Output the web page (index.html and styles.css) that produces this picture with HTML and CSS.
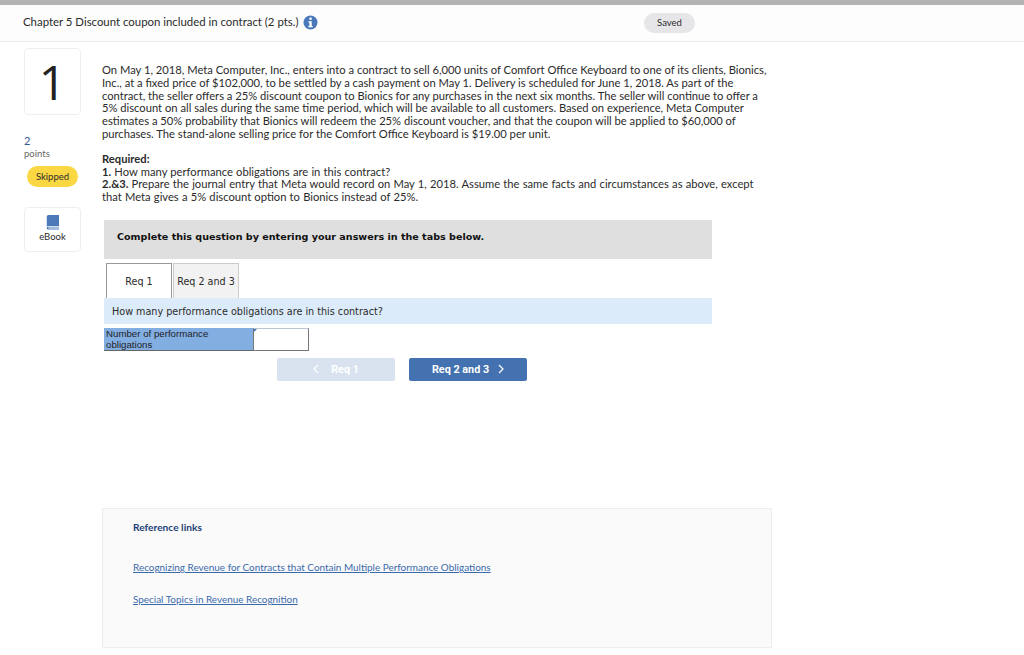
FILE: index.html
```html
<!DOCTYPE html>
<html lang="en">
  <head>
    <meta charset="UTF-8" />
    <title>Chapter 5 Discount coupon included in contract</title>
    <link rel="stylesheet" href="styles.css">
  </head>
  <body>
    <header class="header">
      <div class="header-title">
        <span>Chapter 5 Discount coupon included in contract (2 pts.)</span>
        <svg class="info-icon" width="15" height="15" viewBox="0 0 15 15">
          <circle cx="7.5" cy="7.5" r="7" fill="#4a78b8" />
          <rect x="6.3" y="2.6" width="2.5" height="2.3" rx="0.8" fill="#fff" />
          <path d="M5.4 6.2h3.3v4.7h1v1.4H5.4v-1.4h1v-3.300h-1z" fill="#fff" />
        </svg>
      </div>
      <div class="saved">Saved</div>
    </header>

    <div class="content">
      <aside class="sidebar">
        <div class="question-num">1</div>
        <div class="points-num">2</div>
        <div class="points-label">points</div>
        <div class="skipped">Skipped</div>
        <div class="ebook">
          <svg width="14" height="15" viewBox="0 0 14 15">
            <path d="M2.500 0H13v11H2.800C1.800 11 1 11.300 0.800 12V1.800C0.800 0.700 1.400 0 2.500 0z" fill="#4a78b8" />
            <path d="M0.800 13c0-0.900 0.800-1.300 1.700-1.300H13v0.900H2.800c-0.500 0-0.700 0.200-0.700 0.400s0.200 0.500 0.700 0.500H13V14.500H2.500C1.500 14.500 0.800 14 0.800 13z" fill="#4a78b8" />
          </svg>
          <span>eBook</span>
        </div>
      </aside>

      <main class="main">
        <p class="question">
          On May 1, 2018, Meta Computer, Inc., enters into a contract to sell 6,000 units of Comfort Office Keyboard to one of its clients, Bionics, Inc., at a fixed price of $102,000, to be settled by a cash payment on May 1. Delivery is scheduled for June 1, 2018. As part of the contract, the seller offers a 25% discount coupon to Bionics for any purchases in the next six months. The seller will continue to offer a 5% discount on all sales during the same time period, which will be available to all customers. Based on experience, Meta Computer estimates a 50% probability that Bionics will redeem the 25% discount voucher, and that the coupon will be applied to $60,000 of purchases. The stand-alone selling price for the Comfort Office Keyboard is $19.00 per unit.
        </p>
        <div class="required">
          <div><strong>Required:</strong></div>
          <div><strong>1.</strong> How many performance obligations are in this contract?</div>
          <div><strong>2.&amp;3.</strong> Prepare the journal entry that Meta would record on May 1, 2018. Assume the same facts and circumstances as above, except that Meta gives a 5% discount option to Bionics instead of 25%.</div>
        </div>

        <div class="worksheet">
          <div class="instruction">Complete this question by entering your answers in the tabs below.</div>
          <div class="tabs">
            <div class="tab active">Req 1</div>
            <div class="tab">Req 2 and 3</div>
          </div>
          <div class="prompt">How many performance obligations are in this contract?</div>
          <div class="answer-row">
            <div class="answer-label">Number of performance obligations</div>
            <div class="answer-input"></div>
          </div>
          <div class="nav">
            <button class="nav-btn prev">
              <svg width="6" height="10" viewBox="0 0 6 10"><path d="M5 1L1 5l4 4" fill="none" stroke="#fff" stroke-width="1.200" /></svg>
              <span>Req 1</span>
            </button>
            <button class="nav-btn next">
              <span>Req 2 and 3</span>
              <svg width="6" height="10" viewBox="0 0 6 10"><path d="M1 1l4 4-4 4" fill="none" stroke="#fff" stroke-width="1.200" /></svg>
            </button>
          </div>
        </div>

        <section class="references">
          <h4>Reference links</h4>
          <a href="#">Recognizing Revenue for Contracts that Contain Multiple Performance Obligations</a>
          <a href="#">Special Topics in Revenue Recognition</a>
        </section>
      </main>
    </div>
  </body>
</html>
```

FILE: styles.css
```css
html {
  background: #fff;
}
body {
  margin: 0;
  height: 655px;
  overflow: hidden;
  font-family: 'Lato', 'Open Sans', sans-serif;
  color: #2b2b2b;
  border-top: 5px solid #b3b3b3;
  box-sizing: border-box;
}
.header {
  height: 37px;
  box-sizing: border-box;
  padding: 0 329px 0 23px;
  background: #fdfdfd;
  border-bottom: 1px solid #ececec;
  display: flex;
  align-items: center;
  justify-content: space-between;
}
.header-title {
  display: flex;
  align-items: center;
  gap: 5px;
  margin-bottom: 2px;
  font-size: 11.400px;
}
.header-title span {
  margin-bottom: 2px;
}
.saved {
  width: 51px;
  height: 20px;
  border-radius: 10px;
  background: #e6e6e9;
  font-size: 9.500px;
  line-height: 20px;
  text-align: center;
}
.content {
  display: flex;
  padding: 6px 0 0 24px;
}
.sidebar {
  width: 57px;
  margin-right: 21px;
  flex-shrink: 0;
}
.question-num {
  height: 67px;
  box-sizing: border-box;
  border: 1px solid #efefef;
  border-radius: 4px;
  font-family: 'Open Sans', sans-serif;
  font-size: 48px;
  line-height: 65px;
  text-align: center;
  color: #222;
}
.points-num {
  margin-top: 19px;
  font-size: 11px;
  line-height: 14px;
  color: #2f5a92;
}
.points-label {
  font-size: 9.500px;
  line-height: 12px;
  color: #666;
}
.skipped {
  width: 51px;
  height: 21px;
  margin: 6px 0 0 3px;
  border-radius: 11px;
  background: #fbd843;
  font-size: 9.500px;
  line-height: 21px;
  text-align: center;
}
.ebook {
  height: 45px;
  margin-top: 20px;
  box-sizing: border-box;
  border: 1px solid #efefef;
  border-radius: 4px;
  padding-top: 7px;
  display: flex;
  flex-direction: column;
  align-items: center;
  gap: 1px;
  font-size: 9.500px;
  line-height: 12px;
}
.main {
  width: 670px;
  padding-top: 16px;
}
.question,
.required {
  margin: 0;
  font-size: 11.200px;
  line-height: 12.800px;
  color: #2b2b2b;
}
.question {
  width: 668px;
}
.required {
  margin-top: 12px;
  width: 660px;
  word-spacing: 0.350px;
}
.worksheet {
  margin: 16px 0 0 2px;
  width: 608px;
}
.instruction {
  height: 39px;
  padding-left: 13px;
  background: #dfdfdf;
  font-family: 'DejaVu Sans', Verdana, sans-serif;
  font-size: 9.580px;
  font-weight: bold;
  line-height: 33px;
  color: #111;
}
.tabs {
  display: flex;
  gap: 1px;
  margin: 4px 0 0 2px;
}
.tab {
  height: 35px;
  box-sizing: border-box;
  padding: 0 3px;
  min-width: 66px;
  border: 1px solid #ccc;
  border-bottom: none;
  background: #f2f2f2;
  font-family: 'DejaVu Sans', Verdana, sans-serif;
  font-size: 9.600px;
  line-height: 36px;
  text-align: center;
}
.tab.active {
  border-color: #999;
  background: #fff;
}
.prompt {
  height: 26px;
  padding-left: 8px;
  background: #dcebf9;
  font-family: 'DejaVu Sans', Verdana, sans-serif;
  font-size: 9.650px;
  line-height: 27px;
}
.answer-row {
  display: flex;
  height: 23px;
  margin-top: 4px;
  width: 205px;
}
.answer-label {
  width: 149px;
  box-sizing: border-box;
  padding: 0 20px 0 2px;
  background: #82aee2;
  border-bottom: 1px solid #666;
  font-family: 'Liberation Sans', Arial, sans-serif;
  font-size: 9.700px;
  line-height: 11px;
  color: #222;
}
.answer-input {
  flex: 1;
  box-sizing: border-box;
  border: 1px solid #777;
  border-top-color: #b9c6d6;
  background: #fff;
  position: relative;
}
.answer-input::before {
  content: '';
  position: absolute;
  top: 0;
  left: 0;
  border-top: 3px solid #3f74c0;
  border-right: 3px solid transparent;
}
.nav {
  display: flex;
  gap: 14px;
  margin: 7px 0 0 173px;
}
.nav-btn {
  width: 118px;
  height: 23px;
  padding: 0;
  border: none;
  border-radius: 2px;
  display: flex;
  align-items: center;
  justify-content: center;
  font-family: 'Roboto', sans-serif;
  font-size: 10.800px;
  font-weight: bold;
  color: #fff;
}
.prev {
  gap: 12px;
  background: #d9e3ef;
}
.next {
  gap: 9px;
  background: #4472b0;
}
.references {
  height: 140px;
  margin-top: 127px;
  width: 670px;
  box-sizing: border-box;
  padding: 12px 30px 0;
  background: #fafafb;
  border: 1px solid #eeeeee;
}
.references h4 {
  margin: 0 0 28px;
  font-size: 10.200px;
  line-height: 12px;
  font-weight: bold;
  color: #1c3f77;
}
.references a {
  display: block;
  margin-bottom: 20px;
  font-size: 9.930px;
  line-height: 12px;
  color: #3b6aaa;
}
```
